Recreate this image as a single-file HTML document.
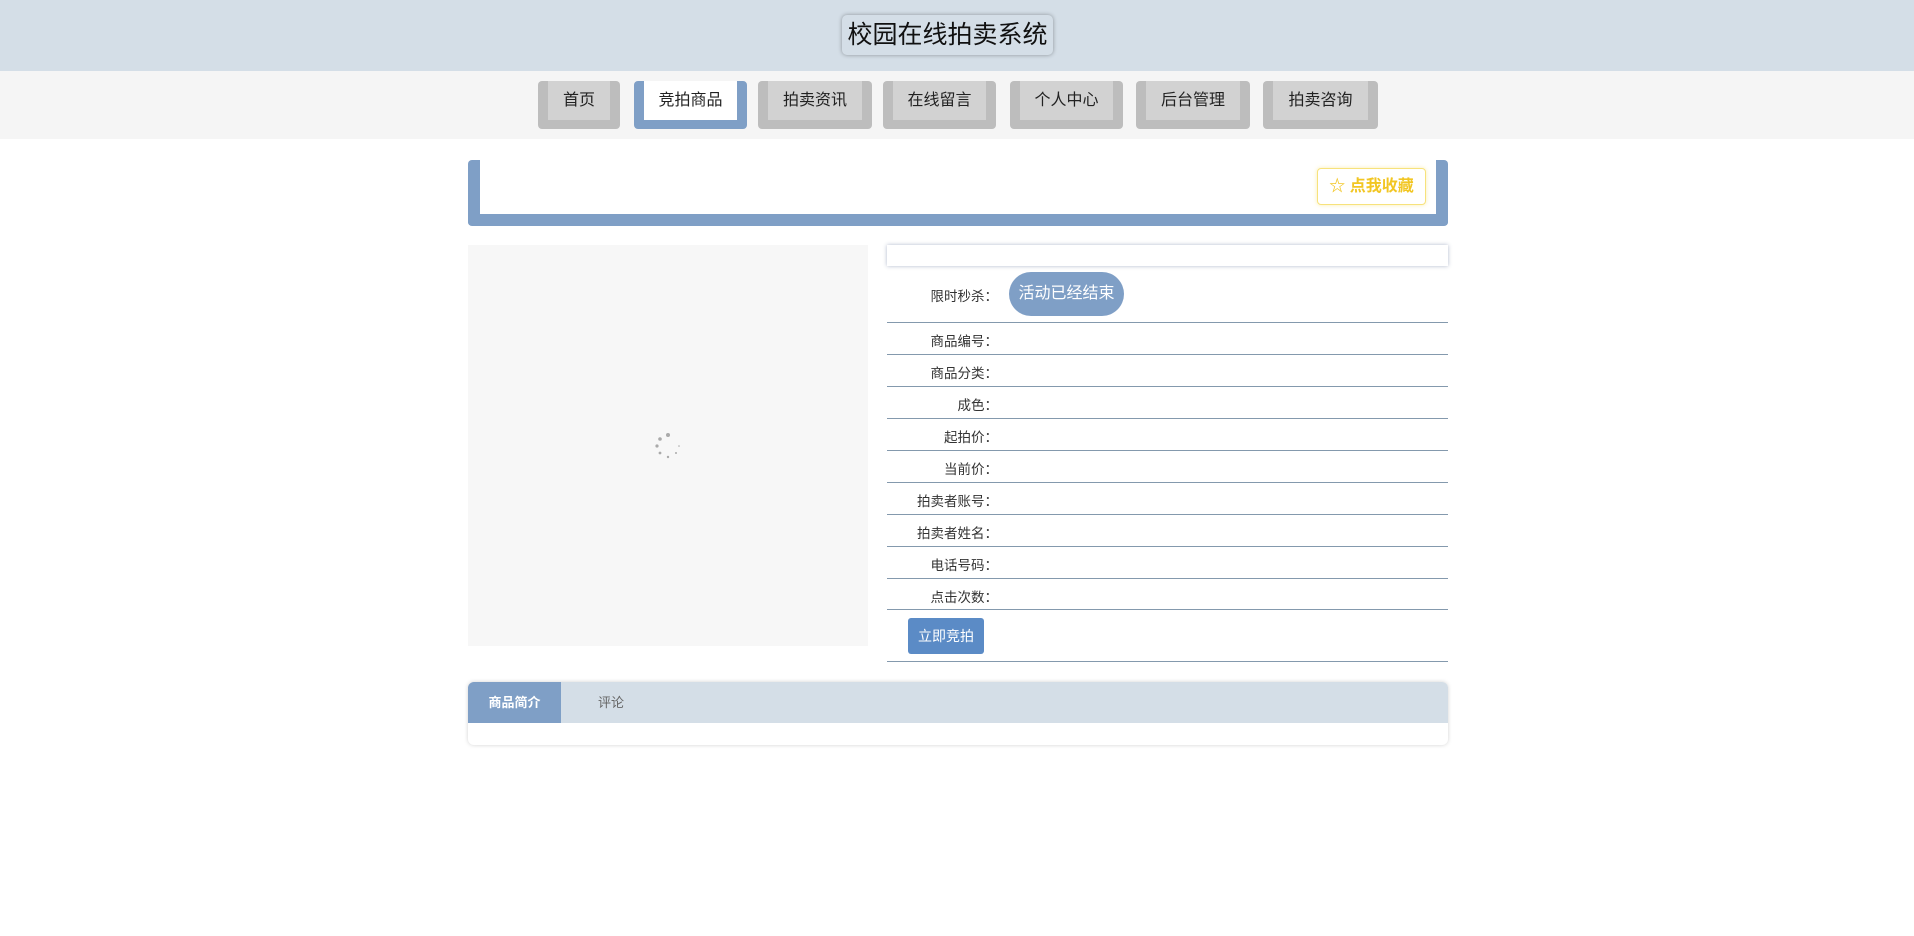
<!DOCTYPE html>
<html><head><meta charset="utf-8"><style>
*{margin:0;padding:0;box-sizing:border-box}
body{width:1914px;height:936px;background:#fff;font-family:"Liberation Sans","Noto Sans CJK SC",sans-serif;position:relative;overflow:hidden}
.hd{position:absolute;left:0;top:0;width:1914px;height:71px;background:#d4dee7;box-shadow:0 2px 3px rgba(0,0,0,.12)}
.title{position:absolute;left:842px;top:15px;width:211px;height:40px;border-radius:5px;background:#d4dee7;box-shadow:0 0 4px rgba(0,0,0,.35);font-size:25px;line-height:40px;text-align:center;color:#111}
.nav{position:absolute;left:0;top:71px;width:1914px;height:68px;background:#f5f5f5}
.nb{position:absolute;top:10px;height:48px;background:#bdbdbd;border-radius:4px;padding:0 10px 9px}
.nb span{display:block;height:39px;background:#d2d2d2;font-size:16px;line-height:39px;text-align:center;color:#222}
.nb.a{background:#7f9fc6}.nb.a span{background:#fff}
.box{position:absolute;left:468px;top:160px;width:980px;height:66px;border:12px solid #7f9fc6;border-top:0;border-radius:4px}
.fav{position:absolute;left:1317px;top:168px;width:109px;height:37px;border:1px solid #f7e27c;border-radius:4px;box-shadow:0 0 4px rgba(247,226,124,.6);color:#f2c623;font-size:16px;font-weight:bold;line-height:35px;text-align:center;background:#fff}
.img{position:absolute;left:468px;top:245px;width:400px;height:401px;background:#f7f7f7}
.top{position:absolute;left:887px;top:245px;width:561px;height:21px;background:#fff;box-shadow:0 0 4px rgba(80,100,140,.45)}
.lbl{position:absolute;left:887px;width:111px;text-align:right;font-size:13.5px;color:#333}
.ln{position:absolute;left:887px;width:561px;height:1px;background:#8499ad}
.pill{position:absolute;left:1009px;top:272px;width:115px;height:44px;border-radius:22px;background:#7f9fc6;color:#fff;font-size:16px;line-height:44px;text-align:center}
.btn{position:absolute;left:908px;top:618px;width:76px;height:36px;border-radius:3px;background:#5b8bc6;color:#fff;font-size:14px;line-height:36px;text-align:center}
.tabs{position:absolute;left:468px;top:682px;width:980px;height:63px;border-radius:6px;box-shadow:0 0 4px rgba(0,0,0,.18);overflow:hidden;background:#fff}
.th{height:41px;background:#d4dee7;position:relative}
.t1{position:absolute;left:0;top:0;width:93px;height:41px;background:#7f9fc6;color:#fff;font-size:13px;font-weight:bold;line-height:41px;text-align:center}
.t2{position:absolute;left:130px;top:0;line-height:41px;font-size:13px;color:#666}
</style></head><body>
<div class="hd"><div class="title">校园在线拍卖系统</div></div>
<div class="nav">
<div class="nb" style="left:538px;width:82px"><span>首页</span></div>
<div class="nb a" style="left:634px;width:113px"><span>竞拍商品</span></div>
<div class="nb" style="left:758px;width:114px"><span>拍卖资讯</span></div>
<div class="nb" style="left:883px;width:113px"><span>在线留言</span></div>
<div class="nb" style="left:1010px;width:113px"><span>个人中心</span></div>
<div class="nb" style="left:1136px;width:114px"><span>后台管理</span></div>
<div class="nb" style="left:1263px;width:115px"><span>拍卖咨询</span></div>
</div>
<div class="box"></div>
<div class="fav">☆ 点我收藏</div>
<div class="img"><svg style="position:absolute;left:186px;top:187px" width="28" height="28" viewBox="0 0 28 28"><g fill="#aaa"><circle cx="14" cy="3" r="2"/><circle cx="6" cy="7" r="1.8"/><circle cx="3" cy="14" r="1.6"/><circle cx="6" cy="21" r="1.4"/><circle cx="14" cy="25" r="1.2"/><circle cx="22" cy="21" r="1"/><circle cx="25" cy="14" r=".8"/></g></svg></div>
<div class="top"></div>
<div class="lbl" style="top:285px">限时秒杀：</div>
<div class="pill">活动已经结束</div>
<div class="ln" style="top:322px"></div>
<div class="lbl" style="top:330px">商品编号：</div>
<div class="ln" style="top:354px"></div>
<div class="lbl" style="top:362px">商品分类：</div>
<div class="ln" style="top:386px"></div>
<div class="lbl" style="top:394px">成色：</div>
<div class="ln" style="top:418px"></div>
<div class="lbl" style="top:426px">起拍价：</div>
<div class="ln" style="top:450px"></div>
<div class="lbl" style="top:458px">当前价：</div>
<div class="ln" style="top:482px"></div>
<div class="lbl" style="top:490px">拍卖者账号：</div>
<div class="ln" style="top:514px"></div>
<div class="lbl" style="top:522px">拍卖者姓名：</div>
<div class="ln" style="top:546px"></div>
<div class="lbl" style="top:554px">电话号码：</div>
<div class="ln" style="top:578px"></div>
<div class="lbl" style="top:586px">点击次数：</div>
<div class="ln" style="top:609px"></div>
<div class="btn">立即竞拍</div>
<div class="ln" style="top:661px"></div>
<div class="tabs"><div class="th"><div class="t1">商品简介</div><div class="t2">评论</div></div></div>
</body></html>
